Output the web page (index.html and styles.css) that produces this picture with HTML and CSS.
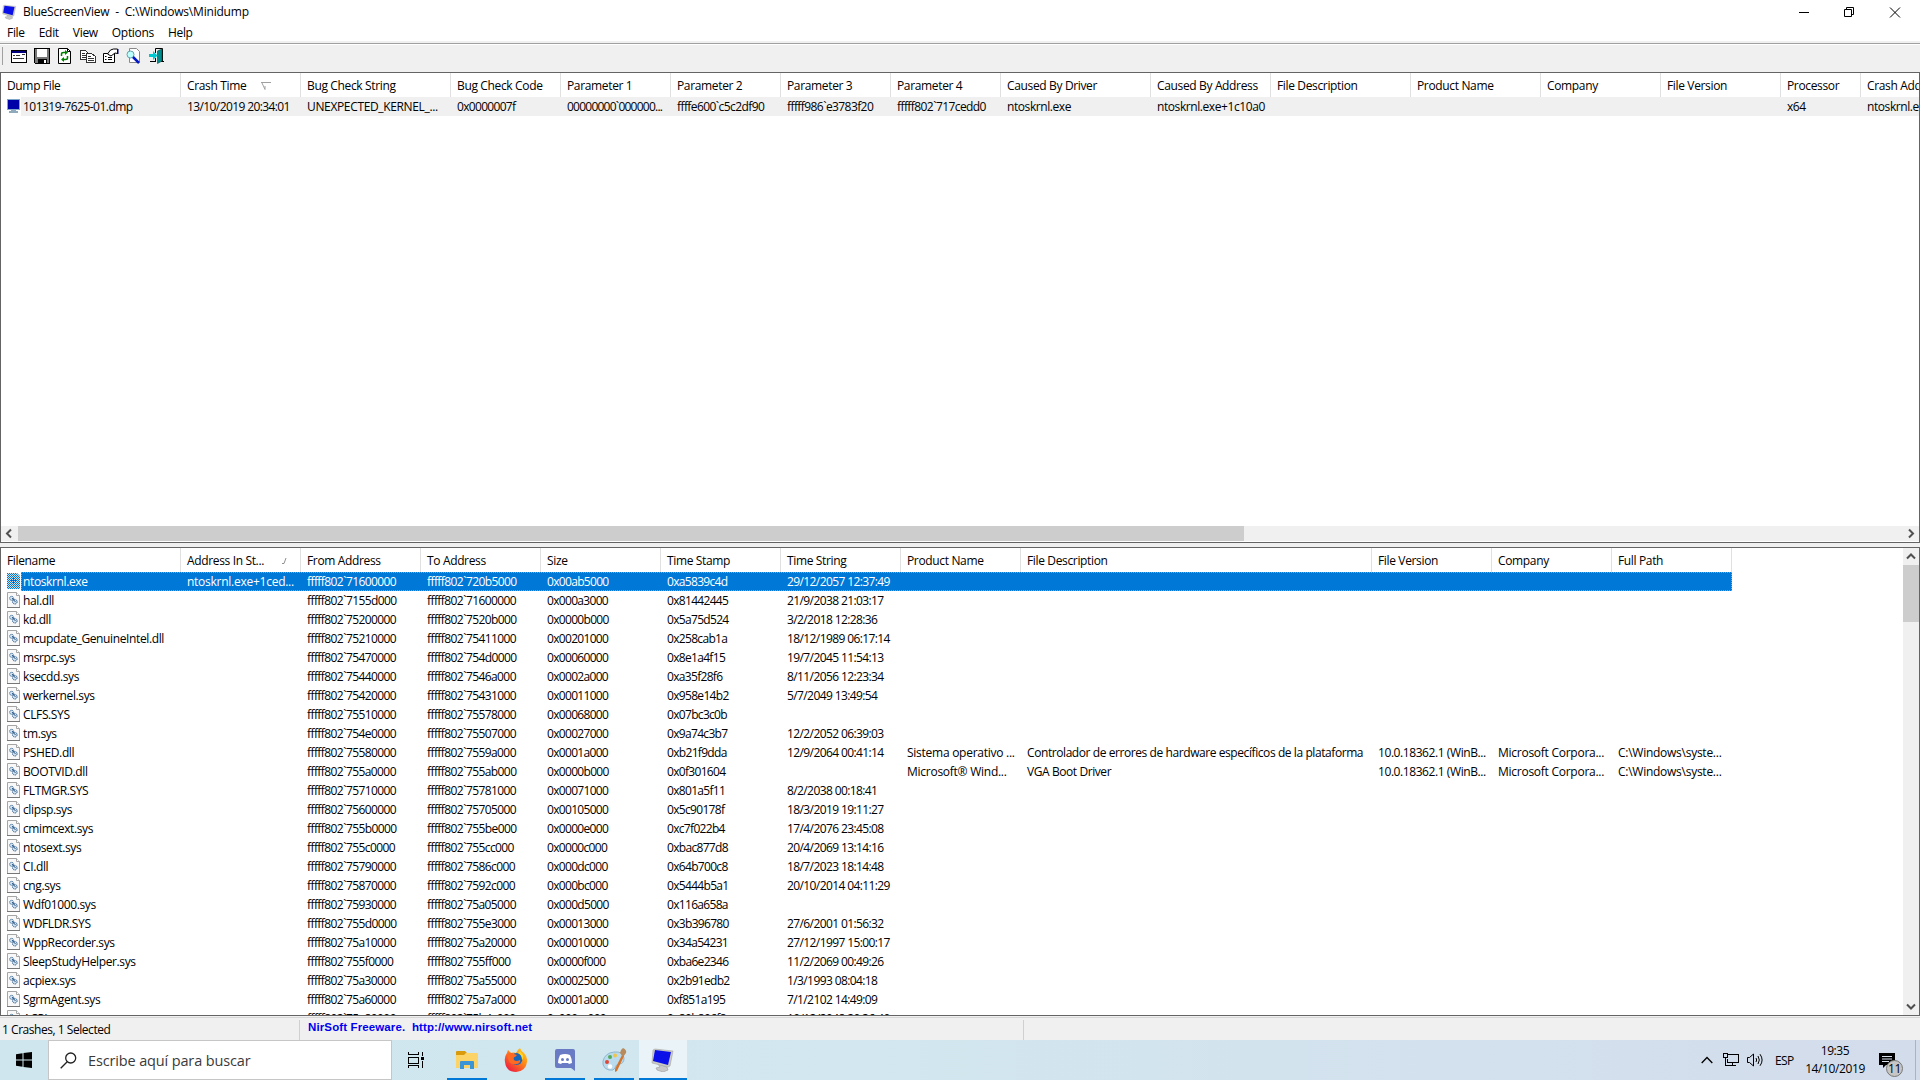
FILE: index.html
```
<!DOCTYPE html>
<html lang="es">
<head>
    <meta charset="UTF-8">
    <meta name="viewport" content="width=device-width, initial-scale=1.0">
    <title>BlueScreenView</title>
    <link rel="stylesheet" href="styles.css">
</head>
<body>
    <!-- shared icons -->
    <svg class="sprites">
        <symbol id="dll" viewBox="0 0 13 16">
            <path d="M.5.5h9l3 3v12H.5z" fill="#f8f8f8" stroke="#a5a5a5"/>
            <path d="M9.5.5v3h3" fill="#fff" stroke="#a5a5a5"/>
            <path d="M0 15.5h13" stroke="#777"/>
            <circle cx="4.6" cy="6.3" r="2" fill="#d5e3ef" stroke="#416f9b" stroke-dasharray="1.3 .5"/>
            <circle cx="7.8" cy="9.7" r="2.3" fill="#d5e3ef" stroke="#28588a" stroke-dasharray="1.3 .5"/>
            <path d="M5 6l3.5 4" stroke="#28588a"/>
        </symbol>
        <symbol id="monitor" viewBox="0 0 24 24">
            <path d="M7 16l9 3 1 3-5 2-6-2-1-2 4-1z" fill="#c8c8c8" stroke="#999" stroke-width=".6"/>
            <path d="M2 2L4 1l18 2-3 15-2 1L1 15z" fill="#c9c9c6" stroke="#a6a6a3" stroke-width=".6"/>
            <path d="M4 2l16 2-3 13-15-4z" fill="#0c10e8"/>
        </symbol>
    </svg>

    <div class="window">
        <div class="title-bar">
            <svg class="app-icon"><use href="#monitor"/></svg>
            <span class="title-text">BlueScreenView&nbsp; -&nbsp; C:\Windows\Minidump</span>
            <svg class="window-buttons" viewBox="0 0 140 20" fill="none" stroke="#000">
                <path d="M19 10.5h10"/>
                <path d="M64.500 7.500h7v7h-7zM66.500 7.500v-2h7v7h-2"/>
                <path d="M110 5.500l10 10M120 5.500l-10 10"/>
            </svg>
        </div>
        <div class="menu-bar">
            <span>File</span><span>Edit</span><span>View</span><span>Options</span><span>Help</span>
        </div>
        <div class="toolbar">
            <svg viewBox="0 0 16 16" shape-rendering="crispEdges">
                <path d="M.5 2.500h15v12H.5z" fill="#fff" stroke="#000"/>
                <path d="M1 3h14v2H1z" fill="#000080"/>
                <path d="M2 7.500h2M5 7.500h4M11 6.500h3M2 10.500h11" stroke="#333"/>
            </svg>
            <svg viewBox="0 0 16 16" shape-rendering="crispEdges">
                <path d="M.5.5h15v15h-14l-1-1z" fill="#777" stroke="#000"/>
                <path d="M3 1h10v8H3z" fill="#fff"/>
                <path d="M4 11h9v5H4z" fill="#000"/><path d="M10 12h2v3h-2z" fill="#fff"/>
            </svg>
            <svg viewBox="0 0 16 16">
                <path d="M1.500.5h9l3 3v12h-12z" fill="#fff" stroke="#000"/>
                <path d="M10.500.5v3h3" fill="none" stroke="#000"/>
                <path d="M4.500 8V6q0-1.500 2-1.500h2M10.500 8v2q0 1.500-2 1.500h-2" fill="none" stroke="#008000" stroke-width="1.500"/>
                <path d="M8 2l3 2.500L8 7zM7 9l-3 2.500L7 14z" fill="#008000"/>
            </svg>
            <svg viewBox="0 0 16 16" shape-rendering="crispEdges">
                <path d="M.5 2.500h5l3 3v6h-8z" fill="#fff" stroke="#333"/>
                <path d="M2 5.500h3M2 7.500h4M2 9.500h4" stroke="#333"/>
                <path d="M6.500 5.500h5l4 3v6h-9z" fill="#fff" stroke="#333"/>
                <path d="M8 8.500h3M8 10.500h6M8 12.500h6" stroke="#333"/>
            </svg>
            <svg viewBox="0 0 16 16">
                <path d="M.5 5.500h11v9H.5z" fill="#fff" stroke="#000"/>
                <path d="M2 8.500h1.500M2 11.500h1.500M5 9.500h4M5 11.500h4" stroke="#000"/>
                <path d="M4.500 6l3-4 3-1h4v4.500L12 5 8 8z" fill="#fff" stroke="#000"/>
                <path d="M14 1h1.500v5H14z" fill="#000080"/>
            </svg>
            <svg viewBox="0 0 16 16">
                <path d="M3.500.5h7l3 3v11h-10z" fill="#fff" stroke="#888"/>
                <circle cx="4.500" cy="6.500" r="3.500" fill="#bff" stroke="#6aa0a8"/>
                <path d="M7 9l6 6" stroke="#0018c8" stroke-width="2.500"/>
            </svg>
            <svg viewBox="0 0 16 16">
                <path d="M6.500 5V.5h7v13.500M6.500 10v4M1 13.500h6M12 13.500h3" fill="none" stroke="#000"/>
                <path d="M8.500 3l4.500-2v12l-4.500 2.500z" fill="#008c8c" stroke="#044" stroke-width=".6"/>
                <path d="M0 6h4V3l4.500 4.500L4 12V9H0z" fill="#00c8d0"/>
            </svg>
        </div>

        <div class="list-view crash-list">
            <div class="list-header" id="crashHeader"></div>
            <div class="list-body" id="crashRows"></div>
            <div class="scroll-h">
                <svg viewBox="0 0 17 15"><path d="M10 3.500l-4 4 4 4" fill="none" stroke="#505050" stroke-width="2"/></svg>
                <div class="thumb"></div>
                <svg class="end" viewBox="0 0 17 15"><path d="M7 3.500l4 4-4 4" fill="none" stroke="#505050" stroke-width="2"/></svg>
            </div>
        </div>

        <div class="list-view driver-list">
            <div class="driver-table">
                <div class="list-header" id="driverHeader"></div>
                <div class="list-body" id="driverRows"></div>
            </div>
            <div class="scroll-v">
                <svg viewBox="0 0 16 17"><path d="M4 10.500l4-4 4 4" fill="none" stroke="#505050" stroke-width="2"/></svg>
                <div class="thumb"></div>
                <svg class="end" viewBox="0 0 16 17"><path d="M4 6.500l4 4 4-4" fill="none" stroke="#505050" stroke-width="2"/></svg>
            </div>
        </div>

        <div class="status-bar">
            <div class="status-count">1 Crashes, 1 Selected</div>
            <div class="status-link">NirSoft Freeware.&nbsp; http://www.nirsoft.net</div>
            <div class="status-rest"></div>
        </div>
    </div>

    <div class="taskbar">
        <div class="start">
            <svg viewBox="0 0 16 16"><path d="M0 2.200L6.500 1.300V7.500H0zM7.500 1.100L16 0v7.500H7.500zM0 8.500h6.500v6.200L0 13.800zM7.500 8.500H16V16l-8.500-1.100z"/></svg>
        </div>
        <div class="search">
            <svg viewBox="0 0 17 17" fill="none" stroke="#222" stroke-width="1.300"><circle cx="10.700" cy="6" r="5"/><path d="M7.200 9.700L.7 16.200"/></svg>
            <span>Escribe aquí para buscar</span>
        </div>
        <div class="task task-view">
            <svg width="17" height="16" viewBox="0 0 17 16" fill="none" stroke="#000" shape-rendering="crispEdges">
                <path d="M.5 0v2.500h10V0M.5 5.500h10v6H.5zM.5 16v-2.500h10V16M14.500 0v4M14.500 9v7"/><path d="M13 5h3v3h-3z" fill="#000" stroke="none"/>
            </svg>
        </div>
        <div class="task open">
            <svg width="22" height="20" viewBox="0 0 22 20">
                <path d="M0 2q0-1 1-1h8l2 2h-1v6H0z" fill="#d99b0c"/>
                <path d="M0 5h8l2-2h11q1 0 1 1v14H0z" fill="#fbd367"/>
                <path d="M4 19v-7q0-1 1-1h12q1 0 1 1v7h-4v-4H8v4z" fill="#3b94d6"/>
            </svg>
        </div>
        <div class="task">
            <svg width="24" height="24" viewBox="0 0 24 24">
                <defs>
                    <linearGradient id="fox" x1="1" y1="0" x2=".2" y2="1"><stop offset="0" stop-color="#ffe226"/><stop offset=".45" stop-color="#ff8a16"/><stop offset="1" stop-color="#ee1744"/></linearGradient>
                </defs>
                <path d="M3 5l1-3 3 3q3-1 5 0 2-4 4-5 1 3 4 5 4 4 3 9-1 9-11 10Q2 24 1 14 0 9 3 5z" fill="url(#fox)"/>
                <circle cx="12.500" cy="11" r="6" fill="#1767bd"/>
                <path d="M4 5q4-1 6 1l3 1-2 2q-2 0-1 3 2 2 6 0 1 3-3 4-6 1-8-3-2-4-1-8z" fill="#ff6a22"/>
                <path d="M14 5q4 2 4 7 2-1 1-5l-3-4z" fill="#ffd42a"/>
            </svg>
        </div>
        <div class="task open">
            <svg width="20" height="22" viewBox="0 0 20 22">
                <path d="M2 0h16q2 0 2 2v20l-4-3H2q-2 0-2-2V2q0-2 2-2z" fill="#687bc4"/>
                <path d="M5 6q5-2 10 0 2 4 2 8l-3 1-1-1H7l-1 1-3-1q0-4 2-8z" fill="#fff"/>
                <circle cx="7.500" cy="10.500" r="1.500" fill="#687bc4"/><circle cx="12.500" cy="10.500" r="1.500" fill="#687bc4"/>
            </svg>
        </div>
        <div class="task open">
            <svg width="25" height="24" viewBox="0 0 25 24">
                <path d="M12 4q9-1 10 6 0 6-5 6-3 0-4 4-1 3-6 2-7-2-6-9 2-8 11-9z" fill="#b9dbed" stroke="#83abc4" stroke-width=".8"/>
                <circle cx="5" cy="14" r="2" fill="#e04838"/><circle cx="8" cy="9" r="2" fill="#54a95a"/><circle cx="13" cy="7.500" r="2" fill="#f0c548"/><circle cx="8" cy="18.500" r="2.200" fill="#fff"/>
                <path d="M20 7l2 1-7 15-2 1v-3z" fill="#d5752b"/>
                <path d="M18 5q0-3 3-5 4 2 3 5l-3 4z" fill="#b88b5c"/>
            </svg>
        </div>
        <div class="task open current">
            <svg width="24" height="24"><use href="#monitor"/></svg>
        </div>

        <div class="tray">
            <svg class="tray-up" viewBox="0 0 12 8"><path d="M.7 7L6 1.500 11.300 7" fill="none" stroke="#000" stroke-width="1.300"/></svg>
            <svg class="tray-net" viewBox="0 0 17 14" fill="none" stroke="#000" shape-rendering="crispEdges"><path d="M5 1.500h10.500v8h-11V6M9.500 9.500v3M6 12.500h7M.5.5h4v4h-4zM2.500 4.500v8h4"/></svg>
            <svg class="tray-sound" viewBox="0 0 17 14" fill="none" stroke="#000"><path d="M.5 4.500h2l4-3.500v12l-4-3.500h-2zM9 5q1.300 2 0 4M11 3q2.600 4 0 8M13 1.200q4.200 5.800 0 11.600"/></svg>
            <span class="lang">ESP</span>
            <div class="clock"><span>19:35</span><span>14/10/2019</span></div>
            <div class="notifications">
                <svg viewBox="0 0 16 15"><path d="M0 0h16v12H7l-3 3v-3H0z"/><path d="M3 3.500h10M3 6h10M3 8.500h7" stroke="#d8e0ee"/></svg>
                <span class="badge">11</span>
            </div>
            <div class="show-desktop"></div>
        </div>
    </div>

    <script src="script.js"></script>
</body>
</html>
```
FILE: styles.css
```
* {
    box-sizing: border-box;
}
body {
    margin: 0;
    width: 1920px;
    height: 1080px;
    overflow: hidden;
    font-family: 'Open Sans', 'Noto Sans', sans-serif;
    font-size: 12px;
    letter-spacing: -0.42px;
    color: #000;
    background: #fff;
}
svg {
    display: block;
    flex: none;
}
.sprites {
    display: none;
}
.window {
    display: flex;
    flex-direction: column;
    height: 1040px;
    background: #f0f0f0;
}

/* Title and menu */
.title-bar {
    display: flex;
    align-items: center;
    height: 23px;
    padding-left: 2px;
    background: #fff;
}
.app-icon {
    width: 15px;
    height: 16px;
    margin-right: 6px;
}
.title-text {
    line-height: 23px;
    letter-spacing: -0.2px;
}
.window-buttons {
    width: 140px;
    height: 20px;
    margin-left: auto;
}
.menu-bar {
    display: flex;
    gap: 14px;
    height: 18px;
    padding-left: 7px;
    line-height: 19px;
    background: #fff;
    letter-spacing: -0.31px;
}
.toolbar {
    display: flex;
    align-items: center;
    gap: 7px;
    height: 31px;
    margin-top: 2px;
    padding: 0 0 7px 8px;
    border-top: 1px solid #a0a0a0;
    box-shadow: inset 0 1px #fff;
}
.toolbar::before {
    content: '';
    width: 1px;
    height: 18px;
    margin: 0 1px 0 -6px;
    background: #a0a0a0;
}
.toolbar svg {
    width: 16px;
    height: 16px;
}

/* List views */
.list-view {
    border: 1px solid #646464;
    background: #fff;
    overflow: hidden;
}
.crash-list {
    display: flex;
    flex-direction: column;
    height: 471px;
    margin-top: -2px;
}
.crash-list .list-body {
    flex: 1;
}
.driver-list {
    display: flex;
    height: 469px;
    margin-top: 4px;
}
.driver-table {
    flex: 1;
    overflow: hidden;
}
.list-header,
.row {
    display: flex;
}
.list-header {
    height: 24px;
    line-height: 25px;
}
.cell {
    flex: none;
    padding-left: 6px;
    white-space: nowrap;
    overflow: hidden;
}
.list-header .cell {
    display: flex;
    height: 24px;
    border-right: 1px solid #e0e0e0;
    letter-spacing: -0.35px;
}
.row {
    width: max-content;
    height: 19px;
    line-height: 19px;
}
.row .name {
    display: flex;
    padding-left: 6px;
    letter-spacing: -0.38px;
}
.row .name svg {
    width: 13px;
    height: 16px;
    margin: 1px 3px 0 0;
}
.row .dump {
    letter-spacing: -0.52px;
}
.row .upper {
    letter-spacing: -0.35px;
}
.row .addr {
    letter-spacing: -0.58px;
}
.row .zeros {
    letter-spacing: -0.76px;
}
.row .hex {
    letter-spacing: -0.68px;
}
.row .date {
    letter-spacing: -0.6px;
}
.row .cut {
    letter-spacing: -0.26px;
}
.crash-list .row {
    background: linear-gradient(90deg, #fff 20px, #f0f0f0 20px);
}
.driver-list .row.selected {
    position: relative;
    color: #fff;
    background: linear-gradient(90deg, #fff 20px, #0078d7 20px);
}
.selected::after {
    content: '';
    position: absolute;
    inset: 0 0 0 20px;
    border: 1px dotted #ff8728;
}
.sort {
    width: 10px;
    height: 8px;
    margin: 9px 0 0 15px;
}

/* Scrollbars */
.scroll-h {
    display: flex;
    height: 15px;
    background: #f0f0f0;
    margin-bottom: 1px;
}
.scroll-h svg {
    width: 17px;
    height: 15px;
}
.scroll-h .thumb {
    width: 1226px;
    background: #cdcdcd;
}
.scroll-h .end {
    margin-left: auto;
}
.scroll-v {
    display: flex;
    flex-direction: column;
    width: 16px;
    background: #f0f0f0;
}
.scroll-v svg {
    width: 16px;
    height: 17px;
}
.scroll-v .thumb {
    height: 57px;
    background: #cdcdcd;
}
.scroll-v .end {
    margin-top: auto;
}

/* Status bar */
.status-bar {
    display: flex;
    height: 23px;
    margin-top: 1px;
    border-top: 1px solid #d7d7d7;
}
.status-count {
    width: 300px;
    height: 20px;
    margin-top: 2px;
    padding-left: 2px;
    line-height: 20px;
    letter-spacing: -0.46px;
    border-right: 1px solid #d0d0d0;
}
.status-link {
    width: 724px;
    height: 20px;
    margin-top: 2px;
    padding-left: 8px;
    font: bold 11.5px/15px 'Liberation Sans', Arial, sans-serif;
    letter-spacing: 0.12px;
    color: #0000f0;
    border-right: 1px solid #d0d0d0;
}

/* Taskbar */
.taskbar {
    display: flex;
    height: 40px;
    background: linear-gradient(90deg, #cfe6ee, #d2e7ef 45%, #d3dfed 85%, #d3dcea);
}
.start {
    width: 48px;
    padding: 12px 16px;
}
.start svg {
    width: 16px;
    height: 16px;
}
.search {
    display: flex;
    align-items: center;
    gap: 11px;
    width: 344px;
    padding-left: 11px;
    background: #fff;
    border: 1px solid #c6c6c6;
    font-size: 14.5px;
    letter-spacing: -0.14px;
    color: #3a3a3a;
}
.search svg {
    width: 17px;
    height: 17px;
}
.task {
    display: flex;
    align-items: center;
    justify-content: center;
    width: 48px;
    margin-right: 1px;
}
.task-view {
    margin-right: 3px;
}
.task.open {
    background: linear-gradient(#0078d7, #0078d7) 50% 100% / 40px 2px no-repeat;
}
.task.current {
    background: linear-gradient(#0078d7, #0078d7) 50% 100% / 48px 2px no-repeat #eaf4f8;
}
.tray {
    display: flex;
    align-items: center;
    margin-left: auto;
}
.tray-up {
    width: 12px;
    height: 8px;
    margin-right: 10px;
}
.tray-net {
    width: 17px;
    height: 14px;
    margin-right: 7px;
}
.tray-sound {
    width: 17px;
    height: 14px;
    margin-right: 11px;
}
.lang {
    width: 31px;
    letter-spacing: -0.6px;
}
.clock {
    display: flex;
    flex-direction: column;
    align-items: center;
    width: 58px;
    margin-right: 15px;
    line-height: 18px;
    letter-spacing: -0.4px;
}
.notifications {
    position: relative;
    width: 36px;
}
.notifications svg {
    width: 16px;
    height: 15px;
}
.badge {
    position: absolute;
    left: 7px;
    top: 7px;
    width: 17px;
    height: 17px;
    border: 1px solid #777;
    border-radius: 50%;
    background: #c6c6c6;
    font-size: 12px;
    line-height: 15px;
    text-align: center;
}
.show-desktop {
    width: 5px;
    height: 40px;
    border-left: 1px solid #a9b4c2;
}
```
FILE: script.js
```
const crashColumns = [
    ['Dump File', 180], ['Crash Time', 120], ['Bug Check String', 150], ['Bug Check Code', 110],
    ['Parameter 1', 110], ['Parameter 2', 110], ['Parameter 3', 110], ['Parameter 4', 110],
    ['Caused By Driver', 150], ['Caused By Address', 120], ['File Description', 140],
    ['Product Name', 130], ['Company', 120], ['File Version', 120], ['Processor', 80], ['Crash Address', 120]
];
const crashKinds = ['name dump', 'date', 'upper', 'hex', 'zeros', 'addr', 'addr', 'addr'];
const crashes = [
    ['101319-7625-01.dmp', '13/10/2019 20:34:01', 'UNEXPECTED_KERNEL_...', '0x0000007f', '00000000`000000...',
        'ffffe600`c5c2df90', 'fffff986`e3783f20', 'fffff802`717cedd0', 'ntoskrnl.exe', 'ntoskrnl.exe+1c10a0',
        '', '', '', '', 'x64', 'ntoskrnl.exe+1c10a0']
];

const driverColumns = [
    ['Filename', 180], ['Address In St...', 120], ['From Address', 120], ['To Address', 120], ['Size', 120],
    ['Time Stamp', 120], ['Time String', 120], ['Product Name', 120], ['File Description', 351],
    ['File Version', 120], ['Company', 120], ['Full Path', 120]
];
const driverKinds = ['name', 'cut', 'addr', 'addr', 'hex', 'hex', 'date', 'cut', '', '', 'cut', 'cut'];
const ver = '10.0.18362.1 (WinB...';
const ms = 'Microsoft Corpora...';
const path = 'C:\\Windows\\syste...';
const drivers = [
    ['ntoskrnl.exe', 'ntoskrnl.exe+1ced...', 'fffff802`71600000', 'fffff802`720b5000', '0x00ab5000', '0xa5839c4d', '29/12/2057 12:37:49'],
    ['hal.dll', '', 'fffff802`7155d000', 'fffff802`71600000', '0x000a3000', '0x81442445', '21/9/2038 21:03:17'],
    ['kd.dll', '', 'fffff802`75200000', 'fffff802`7520b000', '0x0000b000', '0x5a75d524', '3/2/2018 12:28:36'],
    ['mcupdate_GenuineIntel.dll', '', 'fffff802`75210000', 'fffff802`75411000', '0x00201000', '0x258cab1a', '18/12/1989 06:17:14'],
    ['msrpc.sys', '', 'fffff802`75470000', 'fffff802`754d0000', '0x00060000', '0x8e1a4f15', '19/7/2045 11:54:13'],
    ['ksecdd.sys', '', 'fffff802`75440000', 'fffff802`7546a000', '0x0002a000', '0xa35f28f6', '8/11/2056 12:23:34'],
    ['werkernel.sys', '', 'fffff802`75420000', 'fffff802`75431000', '0x00011000', '0x958e14b2', '5/7/2049 13:49:54'],
    ['CLFS.SYS', '', 'fffff802`75510000', 'fffff802`75578000', '0x00068000', '0x07bc3c0b', ''],
    ['tm.sys', '', 'fffff802`754e0000', 'fffff802`75507000', '0x00027000', '0x9a74c3b7', '12/2/2052 06:39:03'],
    ['PSHED.dll', '', 'fffff802`75580000', 'fffff802`7559a000', '0x0001a000', '0xb21f9dda', '12/9/2064 00:41:14', 'Sistema operativo ...', 'Controlador de errores de hardware específicos de la plataforma', ver, ms, path],
    ['BOOTVID.dll', '', 'fffff802`755a0000', 'fffff802`755ab000', '0x0000b000', '0x0f301604', '', 'Microsoft® Wind...', 'VGA Boot Driver', ver, ms, path],
    ['FLTMGR.SYS', '', 'fffff802`75710000', 'fffff802`75781000', '0x00071000', '0x801a5f11', '8/2/2038 00:18:41'],
    ['clipsp.sys', '', 'fffff802`75600000', 'fffff802`75705000', '0x00105000', '0x5c90178f', '18/3/2019 19:11:27'],
    ['cmimcext.sys', '', 'fffff802`755b0000', 'fffff802`755be000', '0x0000e000', '0xc7f022b4', '17/4/2076 23:45:08'],
    ['ntosext.sys', '', 'fffff802`755c0000', 'fffff802`755cc000', '0x0000c000', '0xbac877d8', '20/4/2069 13:14:16'],
    ['CI.dll', '', 'fffff802`75790000', 'fffff802`7586c000', '0x000dc000', '0x64b700c8', '18/7/2023 18:14:48'],
    ['cng.sys', '', 'fffff802`75870000', 'fffff802`7592c000', '0x000bc000', '0x5444b5a1', '20/10/2014 04:11:29'],
    ['Wdf01000.sys', '', 'fffff802`75930000', 'fffff802`75a05000', '0x000d5000', '0x116a658a', ''],
    ['WDFLDR.SYS', '', 'fffff802`755d0000', 'fffff802`755e3000', '0x00013000', '0x3b396780', '27/6/2001 01:56:32'],
    ['WppRecorder.sys', '', 'fffff802`75a10000', 'fffff802`75a20000', '0x00010000', '0x34a54231', '27/12/1997 15:00:17'],
    ['SleepStudyHelper.sys', '', 'fffff802`755f0000', 'fffff802`755ff000', '0x0000f000', '0xba6e2346', '11/2/2069 00:49:26'],
    ['acpiex.sys', '', 'fffff802`75a30000', 'fffff802`75a55000', '0x00025000', '0x2b91edb2', '1/3/1993 08:04:18'],
    ['SgrmAgent.sys', '', 'fffff802`75a60000', 'fffff802`75a7a000', '0x0001a000', '0xf851a195', '7/1/2102 14:49:09'],
    ['ACPI.sys', '', 'fffff802`75a80000', 'fffff802`75b4c000', '0x000cc000', '0x80b896f8', '19/12/2048 20:36:40']
];

const dllIcon = '<svg><use href="#dll"/></svg>';
// selected icons are dithered with the highlight colour
const selectedIcon = '<svg viewBox="0 0 13 16"><defs><pattern id="dots" width="2" height="2" patternUnits="userSpaceOnUse"><path d="M0 0h1v1H0zM1 1h1v1H1z" fill="#0078d7"/></pattern></defs><path d="M0 0h10l3 3v13H0z" fill="#d5dce2"/><path d="M3 7.500h7M6.500 4v7" stroke="#234f7a"/><path d="M0 0h10l3 3v13H0z" fill="url(#dots)"/></svg>';
const dumpIcon = '<svg viewBox="0 0 13 16"><path d="M0 1h13v11H0z" fill="#7ea6c8"/><path d="M1 2h11v9H1z" fill="#0000a8"/><path d="M4 12h5v1H4zM2 13h9v2H2z" fill="#8fa9bd"/></svg>';

const sortDesc = '<svg class="sort" viewBox="0 0 10 8"><path d="M0 .5h10M1 1l3 6.500V4" fill="none" stroke="#a0a0a0"/></svg>';
const sortAsc = '<svg class="sort" viewBox="0 0 10 8"><path d="M3 6.500h2l2-5.500" fill="none" stroke="#909090"/></svg>';

const fillHeader = (id, columns, sortIcon) => {
    document.getElementById(id).innerHTML = columns.map(([label, width], i) =>
        `<div class="cell" style="width:${width}px">${label}${i === 1 ? sortIcon : ''}</div>`
    ).join('');
};

const fillRows = (id, rows, columns, kinds, icon) => {
    document.getElementById(id).innerHTML = rows.map((row, r) => {
        const cells = columns.map(([, width], i) =>
            `<div class="cell ${kinds[i] || ''}" style="width:${width}px">${i === 0 ? icon(r) : ''}${row[i] || ''}</div>`
        ).join('');
        return `<div class="row${id === 'driverRows' && r === 0 ? ' selected' : ''}">${cells}</div>`;
    }).join('');
};

fillHeader('crashHeader', crashColumns, sortDesc);
fillRows('crashRows', crashes, crashColumns, crashKinds, () => dumpIcon);
fillHeader('driverHeader', driverColumns, sortAsc);
fillRows('driverRows', drivers, driverColumns, driverKinds, (r) => r === 0 ? selectedIcon : dllIcon);
```
